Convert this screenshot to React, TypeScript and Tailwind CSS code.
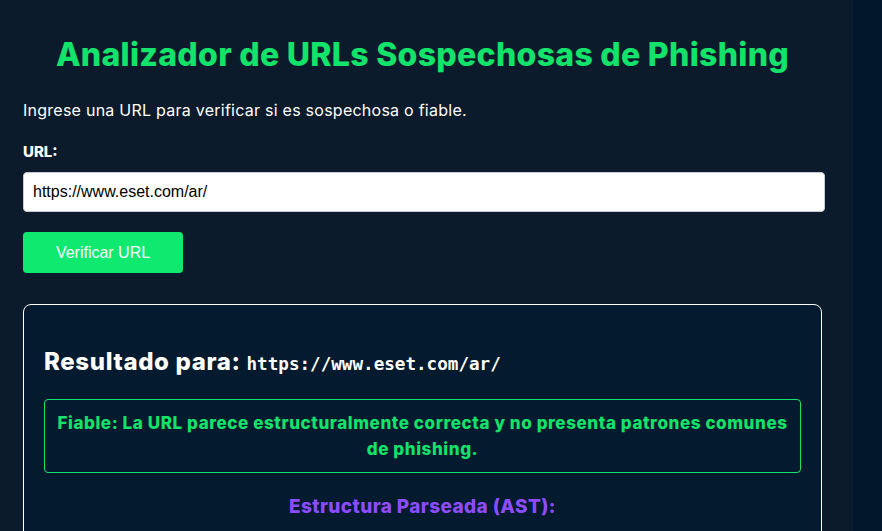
import React from "react";

export default function App() {
  const url = "https://www.eset.com/ar/";
  return (
    <div className="min-h-screen w-full bg-[#02172c]" style={{ fontFamily: "Inter, 'Noto Sans', sans-serif" }}>
      <div className="w-[853px] min-h-[531px] bg-[#0c1b2b] px-[23px] pb-10">
        <h1 className="w-[799px] pt-[35px] text-center text-[32px] leading-[40px] font-extrabold text-[#13e26b] tracking-[0.3px]">
          Analizador de URLs Sospechosas de Phishing
        </h1>
        <p className="mt-[23px] text-[16px] leading-[24px] text-white tracking-[0.25px]">
          Ingrese una URL para verificar si es sospechosa o fiable.
        </p>
        <label className="mt-[20px] block text-[15px] leading-[20px] font-extrabold text-white">URL:</label>
        <input
          readOnly
          value={url}
          className="mt-[10px] block h-[40px] w-[802px] rounded-[4px] border border-[#c8ccd2] bg-white px-[9px] text-[16px] text-black"
          style={{ fontFamily: "'Liberation Sans', Arial, sans-serif" }}
        />
        <button
          className="mt-[20px] block h-[41px] w-[160px] rounded-[4px] bg-[#10e96f] text-[16px] text-white"
          style={{ fontFamily: "'Liberation Sans', Arial, sans-serif" }}
        >
          Verificar URL
        </button>
        <div className="mt-[31px] w-[799px] rounded-[8px] border border-white bg-[#041a2e] px-[20px] pt-[42px] pb-6">
          <h2 className="text-[24px] leading-[30px] font-extrabold text-white tracking-[0.65px]">
            Resultado para:{" "}
            <code className="text-[17.6px] font-bold tracking-normal" style={{ fontFamily: "'DejaVu Sans Mono', monospace" }}>
              {url}
            </code>
          </h2>
          <div className="mt-[20px] rounded-[4px] border border-[#13e26b] px-[10px] py-[10px] text-center text-[17px] leading-[26px] font-extrabold text-[#13e26b] tracking-[0.6px]">
            Fiable: La URL parece estructuralmente correcta y no presenta patrones comunes de phishing.
          </div>
          <h3 className="mt-[21px] text-center text-[19px] leading-[26px] font-extrabold text-[#8b4dff] tracking-[0.4px]">
            Estructura Parseada (AST):
          </h3>
          <pre className="mt-4 rounded bg-[#0c1b2b] p-4 text-[13px] text-white" style={{ fontFamily: "'DejaVu Sans Mono', monospace" }}>
{`{
  "protocolo": "https",
  "dominio": "www.eset.com",
  "ruta": "/ar/"
}`}
          </pre>
        </div>
      </div>
    </div>
  );
}
